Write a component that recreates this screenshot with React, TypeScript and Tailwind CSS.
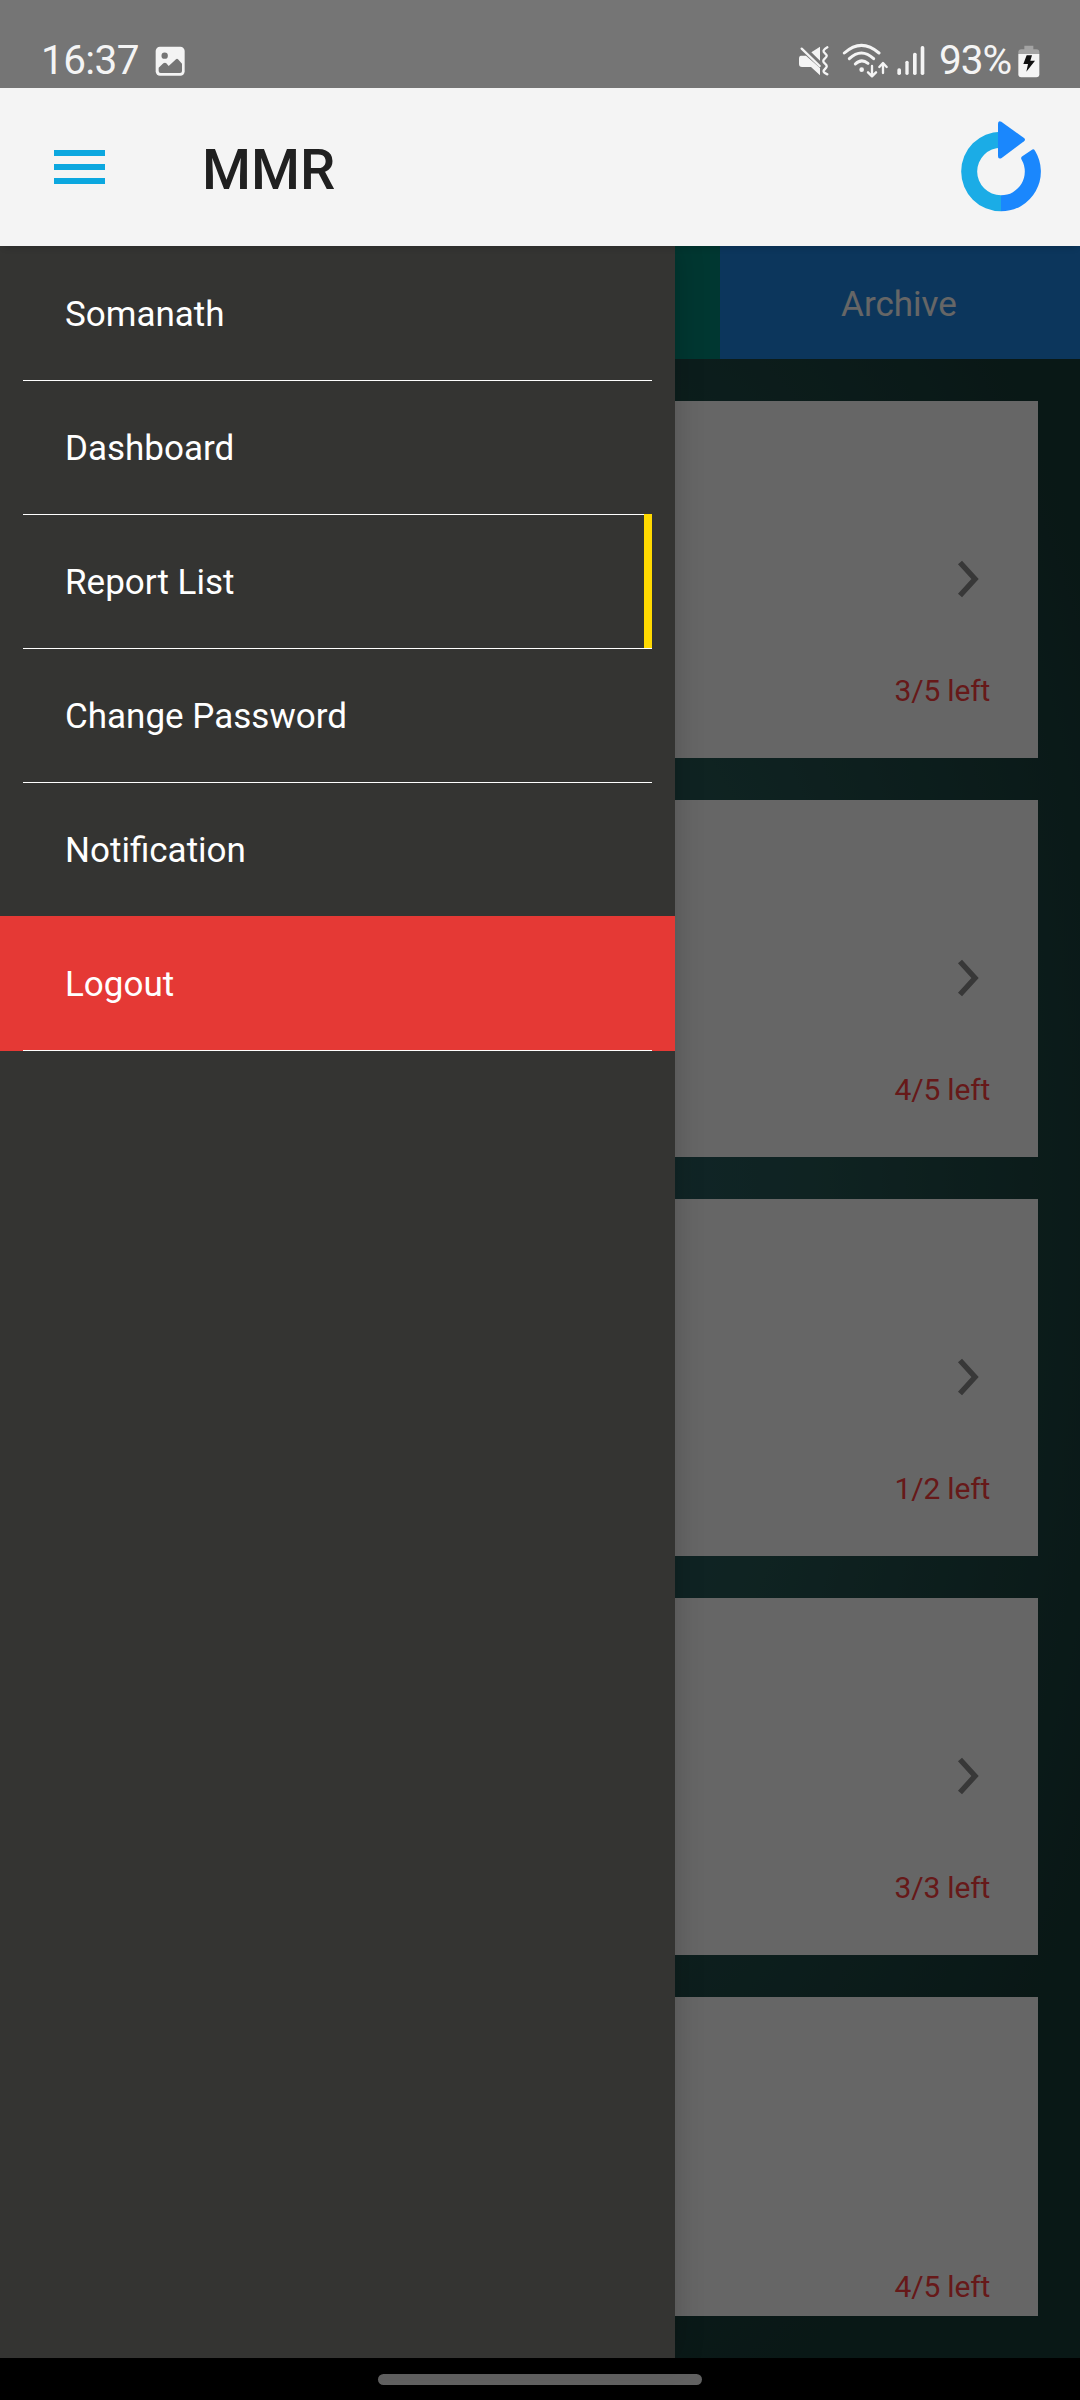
const menuItems = [
  { label: 'Somanath' },
  { label: 'Dashboard' },
  { label: 'Report List', active: true },
  { label: 'Change Password' },
  { label: 'Notification' },
];

const reports = [
  { left: '3/5 left' },
  { left: '4/5 left' },
  { left: '1/2 left' },
  { left: '3/3 left' },
  { left: '4/5 left', last: true },
];

const MutedIcon = () => (
  <svg className="h-[32px] w-[32px]" viewBox="54 75 96 96">
    <path d="M60 107h18l42 37v22l-27-25H66q-9 0-9-9v-16q0-9 6-9zM94 97l26-17v42z" fill="#f4f4f4" />
    <path d="M65 86 L119 138" stroke="#f4f4f4" strokeWidth="7" strokeLinecap="round" />
    <path
      d="M142 82c-14 8-14 12-7 18s7 9 0 15-7 10 0 16 7 10 0 16-7 10 7 16"
      stroke="#f4f4f4"
      strokeWidth="7"
      strokeLinecap="round"
      fill="none"
    />
  </svg>
);

const WifiIcon = () => (
  <svg className="h-[36px] w-[46px]" viewBox="186 66 138 108" fill="none" stroke="#f4f4f4">
    <path d="M193 99Q244 53 297 99" strokeWidth="9" strokeLinecap="round" />
    <path d="M208 116Q244 82 281 116" strokeWidth="9" strokeLinecap="round" />
    <path d="M226 132Q244 114 264 130" strokeWidth="9" strokeLinecap="round" />
    <circle cx="245" cy="149" r="7" fill="#f4f4f4" stroke="none" />
    <path
      d="M276 138v30M264 157l12 12 12-12M309 159v-29M298 141l11-12 11 12"
      strokeWidth="7"
      strokeLinecap="round"
      strokeLinejoin="round"
    />
  </svg>
);

const SignalIcon = () => (
  <svg className="h-[32px] w-[28px]" viewBox="350 75 84 96" fill="#f4f4f4">
    <rect x="351" y="145" width="11" height="20" rx="5" />
    <rect x="375" y="122" width="10" height="43" rx="5" />
    <rect x="398" y="98" width="11" height="67" rx="5" />
    <rect x="421" y="78" width="11" height="87" rx="5" />
  </svg>
);

const BatteryIcon = () => (
  <svg className="h-[33px] w-[22px]" viewBox="713 74 66 99">
    <path d="M732 76h27v11h9q9 0 9 9v6h-63v-6q0-9 9-9h9z" fill="#a3a3a3" />
    <path d="M714 101h63v61q0 9-9 9h-45q-9 0-9-9z" fill="#f4f4f4" />
    <path d="M739 105h16l-5 16h14l-26 33 5-23h-14z" fill="#111" />
  </svg>
);

const PictureIcon = () => (
  <svg className="h-[30px] w-[30px]" viewBox="466 139 90 90">
    <rect x="468" y="141" width="87" height="87" rx="13" fill="#f4f4f4" />
    <circle cx="495" cy="168" r="9.500" fill="#757575" />
    <path
      d="M477 204l14-13q5-4 9 0l7 8 22-20q3-3 6 0l12 13v22q0 6-6 6h-58q-6 0-6-6z"
      fill="#757575"
    />
  </svg>
);

const RefreshIcon = () => (
  <svg className="h-[92px] w-[80px]" viewBox="93 92 240 276">
    <path d="M213 124a119.500 119.500 0 0 0 0 239v-48a71.500 71.500 0 0 1 0-143z" fill="#1bace6" />
    <path
      d="M213 363a119.500 119.500 0 0 0 102-182q-4-6-9-3l-29 20q-6 4-2 10a71.500 71.500 0 0 1-62 107z"
      fill="#1a87fd"
    />
    <path d="M204 100q0-11 10-6l68 49q6 5 0 10l-67 50q-11 5-11-6z" fill="#1a87fd" />
  </svg>
);

const StatusBar = () => (
  <div className="flex h-[88px] items-start justify-between bg-[#757575] pt-[36px] pr-[40px] pl-[41px] text-[40.500px] leading-[48px] text-[#f4f4f4]">
    <div className="flex">
      <span className="w-[114px] tracking-[-0.600px]">16:37</span>
      <div className="pt-[10px]">
        <PictureIcon />
      </div>
    </div>
    <div className="flex">
      <div className="mr-[12px] pt-[9px]">
        <MutedIcon />
      </div>
      <div className="mr-[9px] pt-[6px]">
        <WifiIcon />
      </div>
      <div className="mr-[14px] pt-[9px]">
        <SignalIcon />
      </div>
      <span className="w-[79px] whitespace-nowrap tracking-[-1px]">93%</span>
      <div className="pt-[9px]">
        <BatteryIcon />
      </div>
    </div>
  </div>
);

const Header = () => (
  <header className="relative z-20 flex h-[158px] items-center bg-[#f4f4f4] pr-[39px] pl-[53.500px] shadow-[0_6px_6px_-4px_rgba(0,0,0,0.15)]">
    <div className="mb-px flex w-[51.500px] flex-col gap-2">
      <span className="h-[6px] bg-[#0ba7df]" />
      <span className="h-[6px] bg-[#0ba7df]" />
      <span className="h-[6px] bg-[#0ba7df]" />
    </div>
    <h1 className="ml-[97px] grow pt-[6px] text-[56px] leading-none font-medium text-[#202020]">
      MMR
    </h1>
    <RefreshIcon />
  </header>
);

const Drawer = () => (
  <nav className="absolute inset-y-0 left-0 w-[675px] bg-[#343432] text-[35px] text-white shadow-[0_0_28px_rgba(0,0,0,0.2)]">
    <ul className="pt-px">
      {menuItems.map(({ label, active }) => (
        <li key={label} className="mx-[23px] flex h-[134px] items-center border-b border-white pl-[42px]">
          <span className="grow pt-[3px]">{label}</span>
          {active && <span className="-mt-px h-[134px] w-[8px] bg-[#ffd900]" />}
        </li>
      ))}
    </ul>
    <div className="-mt-px h-[135px] bg-[#e53935] px-[23px]">
      <div className="flex h-full items-center border-b border-white pt-1 pl-[42px]">Logout</div>
    </div>
  </nav>
);

const ReportCard = ({ left, last }: { left: string; last?: boolean }) => (
  <div
    className={`flex shrink-0 flex-col items-end bg-white pr-[49px] ${last ? 'h-[319px]' : 'h-[357px]'}`}
  >
    <div className="mr-[10px] h-[272px] pt-[159px]">
      {!last && (
        <svg className="h-[38px] w-[22px]" viewBox="0 0 22 38" fill="none">
          <path d="M3 2.500 L18 19 L3 35.500" stroke="#8c8c8c" strokeWidth="5.500" />
        </svg>
      )}
    </div>
    <p className="-mr-px text-[30px] leading-[35px] tracking-[-0.200px] text-[#ff4040]">{left}</p>
  </div>
);

const App = () => {
  return (
    <div className="flex h-[2400px] w-[1080px] flex-col overflow-hidden bg-black font-[Roboto,sans-serif]">
      <StatusBar />
      <Header />
      <main className="relative flex h-[2112px] flex-col bg-[radial-gradient(ellipse_640px_1250px_at_50%_46%,#2a6068_0%,#265754_45%,#183c38_100%)]">
        <div className="flex h-[113px] text-[35px] text-white">
          <div className="w-2/3 bg-[#00897b]" />
          <div className="flex w-1/3 items-center justify-center bg-[#1e88e5] pt-[5px] pr-[2px]">Archive</div>
        </div>
        <div className="flex flex-col gap-[42px] px-[42px] pt-[42px]">
          {reports.map((report, i) => (
            <ReportCard key={i} {...report} />
          ))}
        </div>
        <div className="absolute inset-0 bg-black/60" />
        <Drawer />
      </main>
      <footer className="flex h-[42px] justify-center pt-[16px]">
        <div className="h-[11px] w-[324px] rounded-full bg-[#616161]" />
      </footer>
    </div>
  );
};

export default App;
